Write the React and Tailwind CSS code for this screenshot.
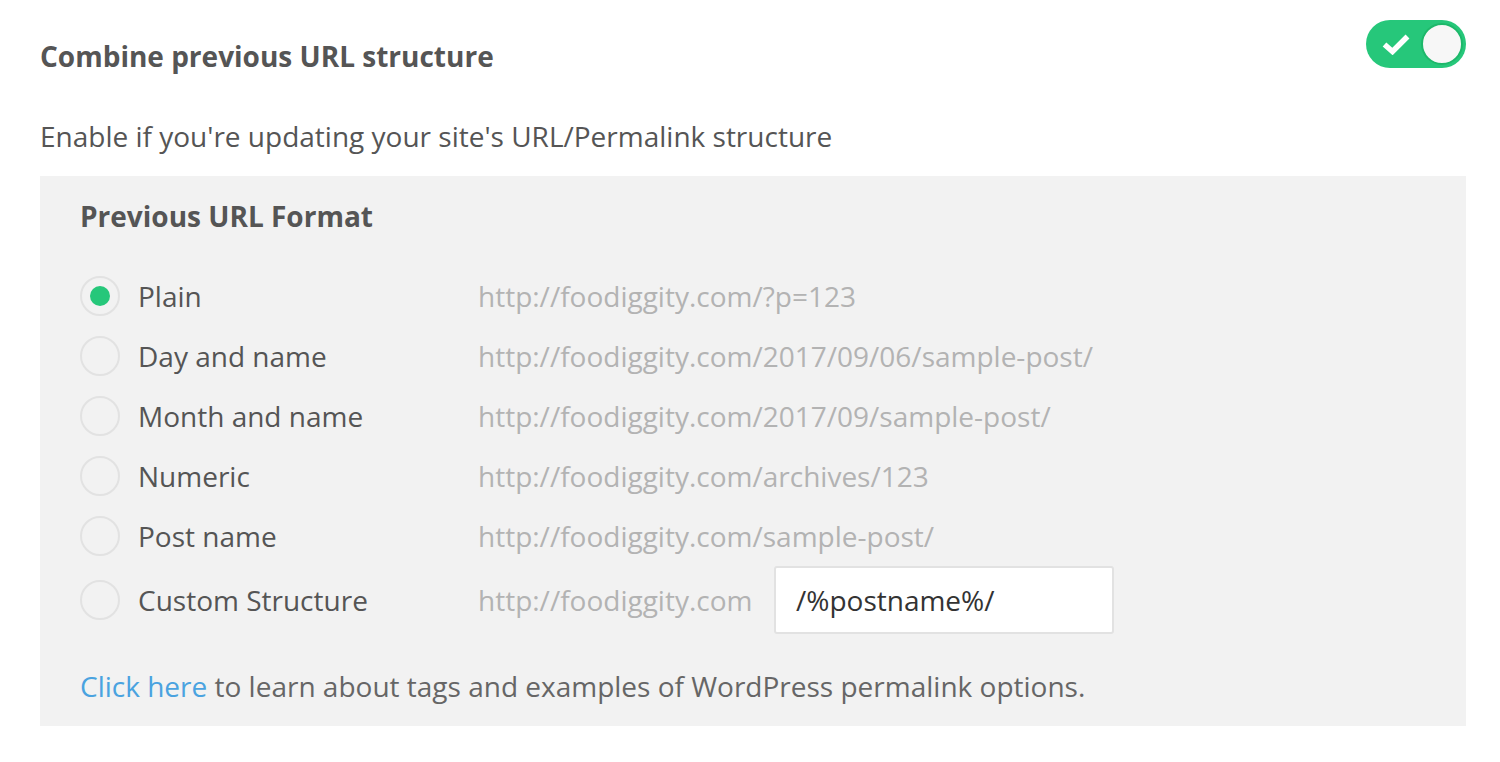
import React from "react";

const rows = [
  { label: "Plain", url: "http://foodiggity.com/?p=123", checked: true },
  { label: "Day and name", url: "http://foodiggity.com/2017/09/06/sample-post/" },
  { label: "Month and name", url: "http://foodiggity.com/2017/09/sample-post/" },
  { label: "Numeric", url: "http://foodiggity.com/archives/123" },
  { label: "Post name", url: "http://foodiggity.com/sample-post/" },
];

function Radio({ checked }) {
  return (
    <span className="flex h-[40px] w-[40px] shrink-0 items-center justify-center rounded-full border-2 border-[#e2e2e2] bg-[#f2f2f2]">
      {checked && <span className="h-[20px] w-[20px] rounded-full bg-[#26c77a]" />}
    </span>
  );
}

export default function App() {
  return (
    <div className="min-h-[762px] bg-white pl-[40px] pr-[34px] pt-[20px] text-[#555] [font-family:'Open_Sans',sans-serif]">
      <div className="flex items-start justify-between">
        <h2 className="mt-[16px] text-[28px] font-bold leading-[40px] text-[#555]">Combine previous URL structure</h2>
        <div className="flex h-[48px] w-[100px] items-center justify-between rounded-full bg-[#26c77a] py-[3px] pl-[16px] pr-[3px]">
          <svg width="28" height="22" viewBox="0 0 28 22" fill="none">
            <path d="M2.5 11.5 L10.5 18.5 L25.5 3.5" stroke="white" strokeWidth="5.5" strokeLinecap="butt" strokeLinejoin="miter" />
          </svg>
          <span className="h-[42px] w-[42px] rounded-full border-2 border-[#1db86a] bg-[#f7f7f7]" />
        </div>
      </div>
      <p className="mt-[40px] text-[28px] leading-[40px] text-[#555]">
        Enable if you're updating your site's URL/Permalink structure
      </p>
      <div className="mt-[20px] bg-[#f2f2f2] px-[40px] pb-[20px] pt-[20px]">
        <h3 className="text-[28px] font-bold leading-[40px] text-[#555]">Previous URL Format</h3>
        <div className="mt-[30px] flex flex-col">
          {rows.map((r) => (
            <div key={r.label} className="flex h-[60px] items-center">
              <Radio checked={r.checked} />
              <span className="ml-[18px] w-[340px] text-[28px] text-[#555]">{r.label}</span>
              <span className="text-[28px] text-[#b3b3b3]">{r.url}</span>
            </div>
          ))}
          <div className="flex h-[68px] items-center">
            <Radio />
            <span className="ml-[18px] w-[340px] text-[28px] text-[#555]">Custom Structure</span>
            <span className="w-[296px] text-[28px] text-[#b3b3b3]">http://foodiggity.com</span>
            <div className="flex h-[68px] w-[340px] items-center rounded-[3px] border-2 border-[#e2e2e2] bg-white pl-[20px] text-[28px] text-[#333]">
              /%postname%/
            </div>
          </div>
        </div>
        <p className="mt-[32px] text-[28px] leading-[40px] text-[#666]">
          <span className="text-[#4aa3e0]">Click here</span> to learn about tags and examples of WordPress permalink options.
        </p>
      </div>
    </div>
  );
}
